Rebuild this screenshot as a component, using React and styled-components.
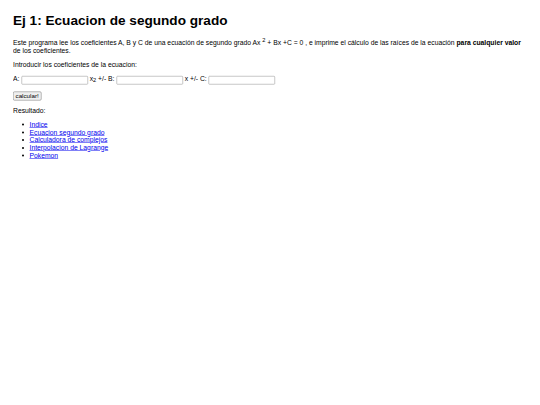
import React from "react";
import styled, { createGlobalStyle } from "styled-components";

const GlobalStyle = createGlobalStyle`
  html, body {
    margin: 0;
    padding: 0;
    background: #ffffff;
    overflow: hidden;
  }
  body {
    font-family: "Liberation Sans", Arial, Helvetica, sans-serif;
    color: #000000;
  }
`;

/* The page is laid out at its natural size and shown at half scale,
   like the reference screenshot. */
const Viewport = styled.div`
  width: 1080px;
  transform: scale(0.5);
  transform-origin: 0 0;
`;

const Page = styled.main`
  padding: 6px 34px 6px 26px;
  font-size: 13.55px;
  line-height: normal;
`;

const Title = styled.h1`
  font-size: 27.2px;
  font-weight: bold;
  margin: 18px 0 18px;
`;

const Paragraph = styled.p`
  margin: 13.33px 0;
`;

const FieldRow = styled.p`
  margin: 13.33px 0 14px;
`;

const TextInput = styled.input`
  box-sizing: border-box;
  width: 133px;
  height: 17px;
  margin: 0;
  padding: 1px 2px;
  border: 1px solid #8f8f8f;
  border-radius: 2px;
  background: #ffffff;
  font-size: 12px;
  font-family: inherit;
  vertical-align: -3px;
  outline: none;
`;

const Button = styled.button`
  display: block;
  box-sizing: border-box;
  height: 18px;
  padding: 0 4px;
  margin: 0;
  font-family: inherit;
  font-size: 12.5px;
  line-height: 1;
  color: #000;
  background: #efefef;
  border: 1px solid #767676;
  border-radius: 3px;
`;

const ResultLabel = styled.p`
  margin: 13px 0 12.5px;
`;

const LinkList = styled.ul`
  margin: 12.5px 0;
  padding-left: 33px;
  list-style: disc;
`;

const Item = styled.li`
  line-height: 15.5px;
`;

const Link = styled.a`
  color: #0000ee;
  text-decoration: underline;
`;

const links = [
  "Indice",
  "Ecuacion segundo grado",
  "Calculadora de complejos",
  "Interpolacion de Lagrange",
  "Pokemon",
];

export default function App() {
  return (
    <>
      <GlobalStyle />
      <Viewport>
        <Page>
          <Title>Ej 1: Ecuacion de segundo grado</Title>
          <Paragraph>
            Este programa lee los coeficientes A, B y C de una ecuación de segundo grado Ax{" "}
            <sup>2</sup> + Bx +C = 0 , e imprime el cálculo de las raíces de la ecuación{" "}
            <b>para cualquier valor</b> de los coeficientes.
          </Paragraph>
          <Paragraph>Introducir los coeficientes de la ecuacion:</Paragraph>
          <FieldRow>
            A: <TextInput type="text" /> x<sub>2</sub> +/- B: <TextInput type="text" /> x +/- C:{" "}
            <TextInput type="text" />
          </FieldRow>
          <Button type="button">calcular!</Button>
          <ResultLabel>Resultado:</ResultLabel>
          <LinkList>
            {links.map((l) => (
              <Item key={l}>
                <Link href="#">{l}</Link>
              </Item>
            ))}
          </LinkList>
        </Page>
      </Viewport>
    </>
  );
}
